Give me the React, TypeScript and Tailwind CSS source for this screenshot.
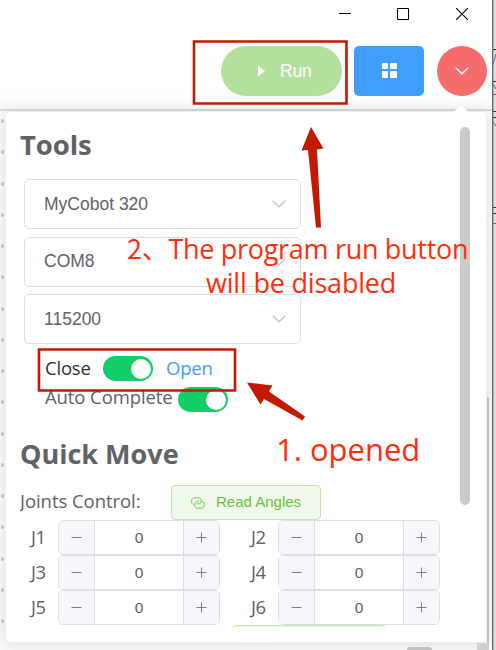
import React from "react";

const ui = "font-['Open_Sans','Noto_Sans',sans-serif]";
const arial = "font-['Liberation_Sans',Arial,sans-serif]";

function Chevron({ className }: { className: string }) {
  return (
    <svg className={className} width="14" height="8" viewBox="0 0 14 8" fill="none" stroke="currentColor" strokeWidth="1.3">
      <path d="M.7 .7 7 6.8 13.3 .7" />
    </svg>
  );
}

function Select({ value }: { value: string }) {
  return (
    <div className={`flex h-[50px] w-[277px] items-center justify-between rounded-[5px] border border-[#dcdfe6] pr-[14px] pl-[19px] text-[17.5px] text-[#606266] ${arial}`}>
      <span>{value}</span>
      <Chevron className="text-[#c0c4cc]" />
    </div>
  );
}

function Toggle() {
  return (
    <div className="flex h-[25px] w-[50px] shrink-0 items-center justify-end rounded-full bg-[#13ce66] pr-[2.5px]">
      <div className="size-5 rounded-full bg-white" />
    </div>
  );
}

function Stepper({ label }: { label: string }) {
  return (
    <div className="flex h-[35px] w-[190px] items-center">
      <span className={`w-7 pb-[2px] pl-px text-[18.5px] tracking-[-0.5px] text-[#606266] ${ui}`}>{label}</span>
      <div className="flex h-[35px] w-[162px] overflow-hidden rounded-[5px] border border-[#dcdfe6]">
        <div className="flex w-9 items-center justify-center border-r border-[#dcdfe6] bg-[#f5f7fa]">
          <svg width="11" height="11" viewBox="0 0 11 11" stroke="#606266" strokeWidth="0.8"><path d="M.5 5.5h10" /></svg>
        </div>
        <div className={`flex flex-1 items-center justify-center text-[15.5px] text-[#606266] ${arial}`}>0</div>
        <div className="flex w-9 items-center justify-center border-l border-[#dcdfe6] bg-[#f5f7fa]">
          <svg width="11" height="11" viewBox="0 0 11 11" stroke="#606266" strokeWidth="0.8"><path d="M.5 5.5h10M5.5 .5v10" /></svg>
        </div>
      </div>
    </div>
  );
}

function Header() {
  return (
    <header className="h-[111px] w-[492px] border-b-2 border-[#d9dadc] bg-linear-to-b from-white from-85% to-[#f8f8f8]">
      <div className="flex h-7 items-center justify-end gap-[46px] pr-[24px]">
        <svg className="-translate-x-px" width="12" height="12" viewBox="0 0 12 12" stroke="#000"><path d="M0 5.5h12" /></svg>
        <svg className="-translate-x-px" width="12" height="12" viewBox="0 0 12 12" fill="none" stroke="#000"><path d="M.5 .5h11v11H.5z" /></svg>
        <svg width="12" height="12" viewBox="0 0 12 12" stroke="#000" strokeWidth="1.1"><path d="m0 0 12 12M12 0 0 12" /></svg>
      </div>
      <div className="mt-[18px] flex justify-end pr-[5px]">
        <div className={`mr-3 flex h-[50px] w-[121px] items-center rounded-full bg-[#b3e19d] pl-[36px] text-[17.5px] tracking-[-0.2px] text-white ${arial}`}>
          <svg className="mr-[14px]" width="9" height="12" viewBox="0 0 9 12" fill="#fff"><path d="M1 .5 8 6 1 11.5z" /></svg>
          Run
        </div>
        <div className="mr-[13px] flex h-[50px] w-[70px] items-center justify-center rounded-[5px] bg-[#409eff]">
          <div className="grid -translate-y-px grid-cols-2 gap-[2px]">
            <i className="size-[6.5px] rounded-[1px] bg-white" />
            <i className="size-[6.5px] rounded-[1px] bg-white" />
            <i className="size-[6.5px] rounded-[1px] bg-white" />
            <i className="size-[6.5px] rounded-[1px] bg-white" />
          </div>
        </div>
        <div className="flex size-[50px] items-center justify-center rounded-full bg-[#f56c6c]">
          <Chevron className="text-white" />
        </div>
      </div>
    </header>
  );
}

function Panel() {
  return (
    <section className="absolute top-[111px] left-[5px] h-[532px] w-[482px] rounded-[5px] border border-[#ebeef5] bg-white pt-[15px] pl-[14px] shadow-[0_2px_15px_rgba(0,0,0,0.12)]">
      <svg className="absolute -top-[7px] right-[17px]" width="16" height="8" viewBox="0 0 16 8" fill="#fff"><path d="M0 8 6.5 1.2q1.5-1.4 3 0L16 8z" /></svg>
      <div className="flex h-[500px] overflow-hidden">
        <div className="w-[440px]">
          <h2 className={`h-[52px] text-[27.5px] leading-[36px] font-bold tracking-[-0.1px] text-[#606266] ${ui}`}>Tools</h2>
          <div className="flex flex-col gap-[7.5px] pl-1">
            <Select value="MyCobot 320" />
            <Select value="COM8" />
            <Select value="115200" />
          </div>
          <div className={`mt-3 flex h-[25px] items-center pl-[25px] text-[18.5px] tracking-[-0.2px] text-[#303133] ${ui}`}>
            <span className="w-[58px] pb-[2px]">Close</span>
            <Toggle />
            <span className="ml-[13px] pb-[2px] text-[#409eff]">Open</span>
          </div>
          <div className={`mt-[6px] flex h-[25px] items-center pl-[25px] text-[18.5px] tracking-[-0.1px] text-[#606266] ${ui}`}>
            <span className="w-[133px] pb-[6px] whitespace-nowrap">Auto Complete</span>
            <Toggle />
          </div>
          <h2 className={`mt-[23px] h-[50px] text-[27px] leading-[38px] font-bold text-[#606266] ${ui}`}>Quick Move</h2>
          <div className="flex h-[35px] items-center">
            <span className={`w-[151px] pb-1 text-[18.5px] tracking-[-0.05px] whitespace-nowrap text-[#606266] ${ui}`}>Joints Control:</span>
            <div className={`flex h-[35px] w-[150px] items-center rounded-[4px] border border-[#c2e7b0] bg-[#f0f9eb] pl-[19px] text-[15px] text-[#67c23a] ${arial}`}>
              <svg className="mr-[11px]" width="14" height="12" viewBox="0 0 14 12" fill="none" stroke="currentColor" strokeWidth="0.9">
                <path d="M2.500 7.500C1.200 7.200 .6 6.200 .6 4.500V3.800C.6 1.800 1.800 .8 3.500 .8H7.500c1.800 0 2.800 1.200 2.800 3s-1 3-2.800 3H5.500" />
                <path d="M11.500 4.300c1.300.3 1.900 1.300 1.900 3 0 2.300-1.200 3.900-2.900 3.900H6.500c-1.800 0-2.800-1.500-2.800-3.500s1-3.400 2.800-3.400H8" />
              </svg>
              Read Angles
            </div>
          </div>
          <div className="grid grid-cols-[220px_220px] pl-[10px]">
            <Stepper label="J1" />
            <Stepper label="J2" />
            <Stepper label="J3" />
            <Stepper label="J4" />
            <Stepper label="J5" />
            <Stepper label="J6" />
          </div>
          <div className="ml-[212px] h-[35px] w-[154px] rounded-[4px] border border-[#c2e7b0] bg-[#f0f9eb]" />
        </div>
        <div className="h-[378px] w-[10px] rounded-full bg-[#cbcbcb]" />
      </div>
    </section>
  );
}

function Annotations() {
  return (
    <div className={`absolute inset-0 whitespace-nowrap text-[#ff2d0c] ${ui}`}>
      <svg className="absolute inset-0" width="496" height="650" viewBox="0 0 496 650" fill="none">
        <path d="M194 41.500h152.500v62H194zM39 349.500h196v41H39z" stroke="#c11a00" strokeWidth="2.6" />
        <path d="m311 127 12.500 21.500-6.500 1 4 78h-5l-8-77.500-6.500 .5zM247 382.500l25.500 3-3.500 6 36 25-2.500 4-38.500-21.500-3.500 5.500z" fill="#c11a00" />
      </svg>
      <p className="absolute top-[230px] left-[127px] text-[27px] leading-[36px] tracking-[-0.3px]">
        <span className="font-['Noto_Sans_CJK_SC',sans-serif]">2、</span>The program run button
      </p>
      <p className="absolute top-[265px] left-[206px] text-[27px] leading-[36px] tracking-[-0.2px]">will be disabled</p>
      <p className="absolute top-[429px] left-[276px] text-[31px] leading-[40px]">1. opened</p>
    </div>
  );
}

export default function App() {
  return (
    <div className="relative h-[650px] w-[496px] overflow-hidden bg-[#fcfcfc]">
      <Header />
      <div className="h-[539px] w-[492px] bg-[#fbfbfb]">
        <div className="flex h-full w-[5px] flex-col gap-[27.250px] pt-[8px]">
          {Array.from({ length: 17 }, (_, i) => (
            <i key={i} className="ml-px h-1 w-[3px] shrink-0 rounded-full bg-[#cccccc]" />
          ))}
        </div>
      </div>
      <Panel />
      <div className="absolute top-[397px] left-[487px] h-[253px] w-[2px] rounded-t bg-[#c1c1c1]" />
      <div className="absolute top-[643px] left-[477px] h-[7px] w-[12px] bg-[#cfcfcf]" />
      <div className="absolute top-[647px] left-[407px] h-[3px] w-[25px] rounded-t-lg bg-[#c1c1c1]" />
      <svg className="absolute top-0 left-[492px]" width="4" height="650" viewBox="0 0 4 650">
        <path d="M0 0h4v650H0z" fill="#dedede" />
        <path d="M.5 0v650" stroke="#666" />
        <path d="M1.500 0v650" stroke="#b4b4b4" />
        <path d="M1 49.500h3M1 81.500h3M1 111.500h3M1 117.500h3M1 207.500h3M1 213.500h3" stroke="#333" />
        <path d="m1 64 3-10M1 84l3 5M1 122l3 4" stroke="#54698a" />
        <path d="M1 94.500h3M1 223.500h3" stroke="#a34848" />
      </svg>
      <Annotations />
    </div>
  );
}
